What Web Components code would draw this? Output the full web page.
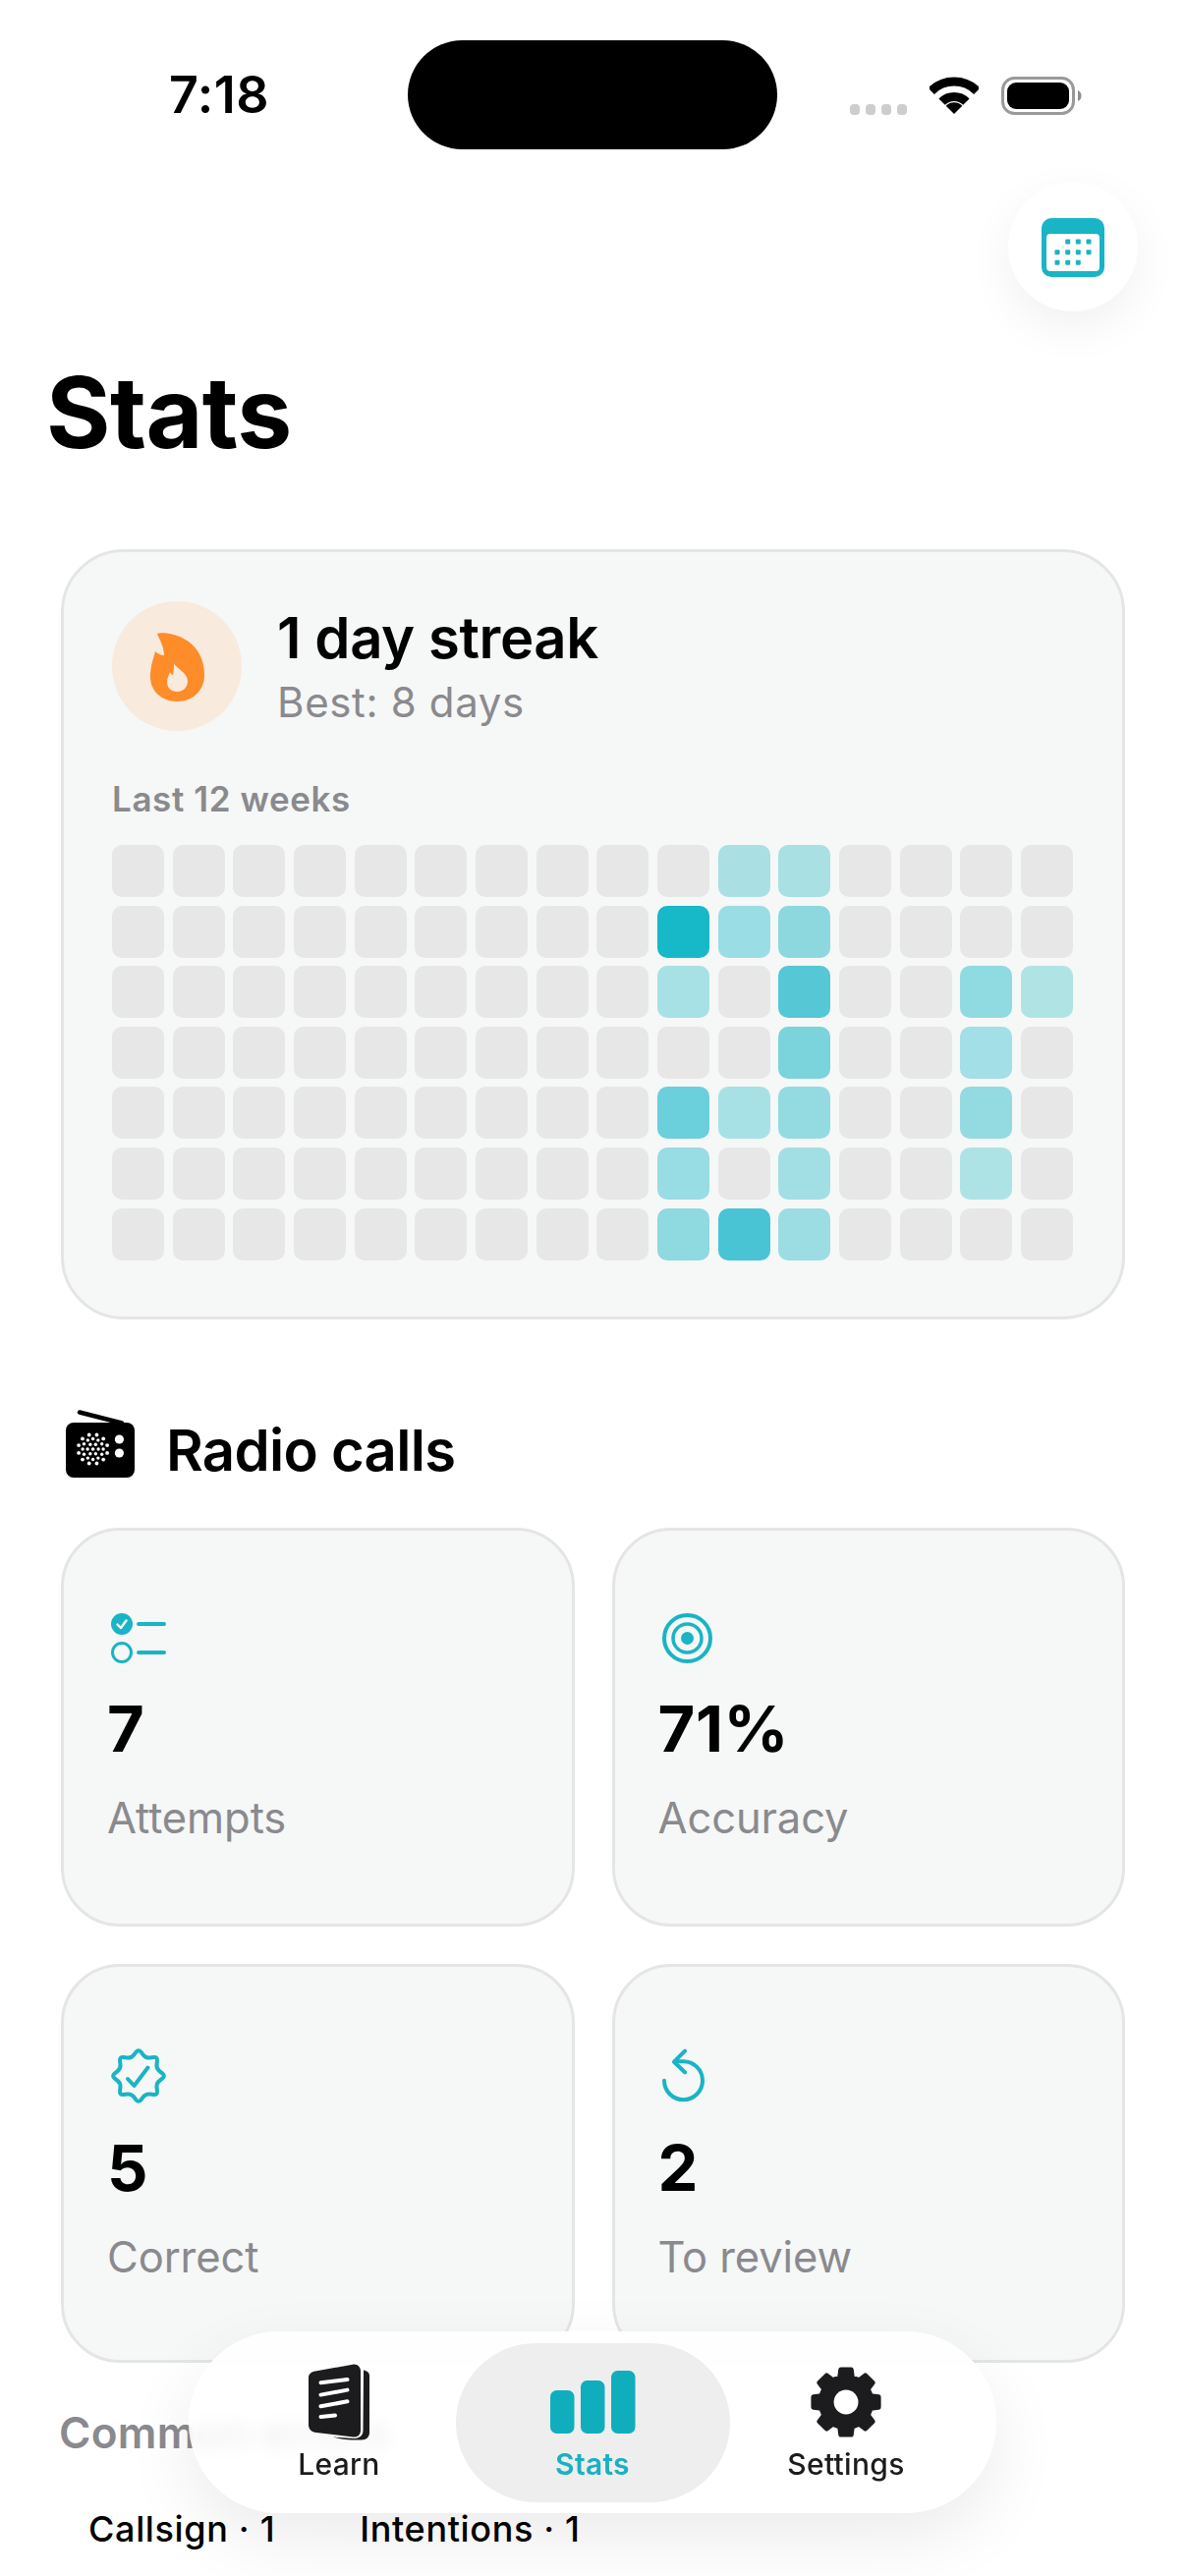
<!DOCTYPE html>
<html lang="en">
<head>
<meta charset="utf-8">
<title>Stats</title>
<style>
  html, body { margin: 0; padding: 0; background: #fff; }
  body { width: 1206px; height: 2622px; overflow: hidden; font-family: Inter, "Noto Sans", sans-serif; color: #000; }
</style>
</head>
<body>
<stats-page>
  <status-bar time="7:18"></status-bar>
  <calendar-button></calendar-button>
  <page-title>Stats</page-title>
  <streak-card>
    <span slot="title">1 day streak</span>
    <span slot="sub">Best: 8 days</span>
    <span slot="caption">Last 12 weeks</span>
  </streak-card>
  <section-title><app-icon slot="icon" name="radio"></app-icon>Radio calls</section-title>
  <stat-grid>
    <stat-card><app-icon slot="icon" name="list"></app-icon><span slot="value">7</span>Attempts</stat-card>
    <stat-card><app-icon slot="icon" name="target"></app-icon><span slot="value">71%</span>Accuracy</stat-card>
    <stat-card><app-icon slot="icon" name="seal" style="margin:-1px 0"></app-icon><span slot="value">5</span>Correct</stat-card>
    <stat-card><app-icon slot="icon" name="review" style="margin:-1px 0 -1px -3px"></app-icon><span slot="value">2</span>To review</stat-card>
  </stat-grid>
  <errors-list>
    <span slot="heading">Common errors</span>
    <error-chip>Callsign · 1</error-chip>
    <error-chip>Intentions · 1</error-chip>
  </errors-list>
</stats-page>
<tab-bar>
  <tab-item><app-icon slot="icon" name="learn"></app-icon>Learn</tab-item>
  <tab-item active><app-icon slot="icon" name="bars"></app-icon>Stats</tab-item>
  <tab-item><app-icon slot="icon" name="gear"></app-icon>Settings</tab-item>
</tab-bar>

<script>
const TEAL = '#19b4c5';

function polar(r, deg) {
  const a = (deg - 90) * Math.PI / 180;
  return [r * Math.cos(a), r * Math.sin(a)];
}

function xy(p) {
  return p[0].toFixed(2) + ' ' + p[1].toFixed(2);
}

// eight pointed badge outline, corners softened
function sealPath() {
  const pts = [];
  for (let i = 0; i < 8; i++) {
    pts.push(polar(27.5, i * 45), polar(19.5, i * 45 + 22.5));
  }
  const t = 0.35;
  let d = '';
  pts.forEach((v, i) => {
    const p = pts[(i + pts.length - 1) % pts.length], n = pts[(i + 1) % pts.length];
    const a = [v[0] + (p[0] - v[0]) * t, v[1] + (p[1] - v[1]) * t];
    const b = [v[0] + (n[0] - v[0]) * t, v[1] + (n[1] - v[1]) * t];
    d += (i ? 'L' : 'M') + xy(a) + 'Q' + xy(v) + ' ' + xy(b);
  });
  return d + 'Z';
}

// gear outline with eight teeth
function gearPath() {
  let d = '';
  for (let i = 0; i < 8; i++) {
    const a = i * 45;
    d += (i ? 'L' : 'M') + xy(polar(26, a - 14)) + 'L' + xy(polar(33.5, a - 9)) + 'L' + xy(polar(33.5, a + 9)) + 'L' + xy(polar(26, a + 14));
  }
  return d + 'Z';
}

// speaker holes of the radio
function speakerDots() {
  let out = '<circle cx="0" cy="0" r="1.8"/>';
  [[5.5, 6, 1.7], [10.5, 12, 1.7], [15, 12, 1.9]].forEach(([r, n, s], k) => {
    for (let i = 0; i < n; i++) {
      const a = (i + (k === 2 ? 0.5 : 0)) * 2 * Math.PI / n;
      out += `<circle cx="${(r * Math.cos(a)).toFixed(2)}" cy="${(r * Math.sin(a)).toFixed(2)}" r="${s}"/>`;
    }
  });
  return out;
}

function calendarDots() {
  const xs = [16, 26.7, 37.3, 48], ys = [24, 34.7, 45.3], on = [[1, 2, 3], [0, 1, 2, 3], [0, 1, 2]];
  let out = '';
  on.forEach((row, r) => row.forEach(c => {
    out += `<rect x="${xs[c] - 2.5}" y="${ys[r] - 2.5}" width="5" height="5" rx="1"/>`;
  }));
  return out;
}

const ICONS = {
  radio: `<svg width="70" height="70" viewBox="0 0 70 70"><path d="M14 2.500 57 13.500" stroke="#000" stroke-width="4.400" stroke-linecap="round"/><rect x="0" y="13" width="70" height="56" rx="8" fill="#000"/><g transform="translate(27.6 40)" fill="#fff">${speakerDots()}</g><circle cx="54.400" cy="30" r="4.600" fill="#fff"/><circle cx="54.400" cy="44" r="4.600" fill="#fff"/></svg>`,
  list: `<svg width="56" height="51" viewBox="0 0 56 51" fill="none"><circle cx="11" cy="11" r="11" fill="${TEAL}"/><path d="M6.500 11.500 10 15 15.500 7.500" stroke="#fff" stroke-width="2.400" stroke-linecap="round" stroke-linejoin="round"/><circle cx="11" cy="40" r="9.500" stroke="${TEAL}" stroke-width="3"/><path d="M28 11H54M28 40H54" stroke="${TEAL}" stroke-width="4" stroke-linecap="round"/></svg>`,
  target: `<svg width="51" height="51" viewBox="0 0 51 51" fill="none" stroke="${TEAL}"><circle cx="25.500" cy="25.500" r="23.500" stroke-width="4"/><circle cx="25.500" cy="25.500" r="14.500" stroke-width="3.500"/><circle cx="25.500" cy="25.500" r="6.500" fill="${TEAL}" stroke="none"/></svg>`,
  seal: `<svg width="56" height="56" viewBox="-28 -28 56 56" fill="none" stroke="${TEAL}" stroke-width="4" stroke-linecap="round" stroke-linejoin="round"><path d="${sealPath()}"/><path d="M-11 3-4.500 10 9.500-8.500"/></svg>`,
  review: `<svg width="56" height="56" viewBox="20 14 56 56" fill="none" stroke="${TEAL}" stroke-width="4" stroke-linecap="round" stroke-linejoin="round"><path d="M25 46.700A19.500 19.500 0 1 0 44.500 27.200H36"/><path d="M46 16.700 35 27.700 46 38.300"/></svg>`,
  learn: `<svg width="62" height="78" viewBox="0 0 62 78"><path d="M56 6.500C59.500 7 62 9 62 12V70C62 74.500 59 77.500 54 77.500H44C37 77.500 30 76 25 74.500L47 76C52 75.500 55.500 73 55.500 68Z" fill="#1c1c1e"/><path d="M7 7.500 45 .7C49.500 0 53 3 53 7.500V68C53 72 50 75 45.500 74.500L8 70C3 69.500 0 66.500 0 62V14C0 10.500 3 8 7 7.500Z" fill="#1c1c1e"/><path d="M12.500 19.300 39.500 16M12.500 31.600 39.500 26.600M12.500 43.300 39.500 38.300M12.500 54 27 52.600" stroke="#fff" stroke-width="4" stroke-linecap="round" fill="none"/></svg>`,
  bars: `<svg width="87" height="64" viewBox="0 0 87 64" fill="#10aebd"><rect x="0" y="20" width="24.500" height="44" rx="6.500"/><rect x="31" y="10" width="24.500" height="54" rx="6.500"/><rect x="62" y="0" width="24.500" height="64" rx="6.500"/></svg>`,
  gear: `<svg width="72" height="72" viewBox="-36 -36 72 72"><path d="${gearPath()}" fill="#1c1c1e" stroke="#1c1c1e" stroke-width="5" stroke-linejoin="round"/><circle r="12.500" fill="#fff"/></svg>`
};

class AppIcon extends HTMLElement {
  constructor() {
    super();
    this.attachShadow({ mode: 'open' });
    this.shadowRoot.innerHTML = `
      <style>
        :host { display: block; line-height: 0; }
      </style>
      ${ICONS[this.getAttribute('name')] || ''}
    `;
  }
}
customElements.define('app-icon', AppIcon);

class StatsPage extends HTMLElement {
  constructor() {
    super();
    this.attachShadow({ mode: 'open' });
    this.shadowRoot.innerHTML = `
      <style>
        :host { display: flex; flex-direction: column; width: 1206px; }
      </style>
      <slot></slot>
    `;
  }
}
customElements.define('stats-page', StatsPage);

class StatusBar extends HTMLElement {
  constructor() {
    super();
    this.attachShadow({ mode: 'open' });
    this.shadowRoot.innerHTML = `
      <style>
        :host { display: flex; height: 111px; padding-top: 41px; box-sizing: content-box; }
        .time { width: 415px; height: 111px; box-sizing: border-box; padding: 30px 0 0 172px; font-size: 52px; line-height: 52px; font-weight: 600; letter-spacing: .5px; }
        .island { width: 376px; height: 111px; background: #000; border-radius: 56px; }
        .right { display: flex; align-items: flex-start; margin-left: 74px; padding-top: 37px; }
        .dots { display: flex; gap: 6px; margin-top: 28px; margin-right: 23px; }
        .dots i { width: 10px; height: 11px; border-radius: 4px; background: #cdcdcd; }
        .wifi { margin-right: 23px; }
      </style>
      <div class="time">${this.getAttribute('time')}</div>
      <div class="island"></div>
      <div class="right">
        <div class="dots"><i></i><i></i><i></i><i></i></div>
        <svg class="wifi" width="50" height="38" viewBox="0 0 50 38"><path d="M1.700 14.700A33 33 0 0 1 48.300 14.700M12.600 25.600A17.500 17.500 0 0 1 37.400 25.600" fill="none" stroke="#000" stroke-width="9"/><path d="M25 38 16.700 29.700A11.700 11.700 0 0 1 33.300 29.700Z" fill="#000"/></svg>
        <svg width="82" height="39" viewBox="0 0 82 39"><rect x="1.500" y="1.500" width="72" height="36" rx="12" fill="none" stroke="#9a9a9a" stroke-width="3"/><rect x="6" y="6" width="63" height="27" rx="9" fill="#000"/><path d="M78 14C80.500 15 81.500 17 81.500 19.500S80.500 24 78 25Z" fill="#8e8e8e"/></svg>
      </div>
    `;
  }
}
customElements.define('status-bar', StatusBar);

class CalendarButton extends HTMLElement {
  constructor() {
    super();
    this.attachShadow({ mode: 'open' });
    this.shadowRoot.innerHTML = `
      <style>
        :host { display: flex; justify-content: flex-end; padding: 33px 48px 0 0; }
        .btn { width: 132px; height: 132px; border-radius: 50%; background: #fff; display: flex; align-items: center; justify-content: center; box-shadow: 0 16px 48px rgba(0,0,0,.06); }
        svg { margin-top: 2px; }
      </style>
      <div class="btn">
        <svg width="64" height="60" viewBox="0 0 64 60"><rect width="64" height="60" rx="10" fill="${TEAL}"/><rect x="5" y="16" width="54" height="38" rx="4" fill="#fff"/><g fill="${TEAL}">${calendarDots()}</g></svg>
      </div>
    `;
  }
}
customElements.define('calendar-button', CalendarButton);

class PageTitle extends HTMLElement {
  constructor() {
    super();
    this.attachShadow({ mode: 'open' });
    this.shadowRoot.innerHTML = `
      <style>
        :host { display: block; margin: 53px 0 0 47px; font-size: 100px; line-height: 100px; font-weight: 700; letter-spacing: -.6px; }
      </style>
      <slot></slot>
    `;
  }
}
customElements.define('page-title', PageTitle);

class StreakCard extends HTMLElement {
  constructor() {
    super();
    this.attachShadow({ mode: 'open' });
    // teal cells as "row,col": colour
    const hot = {
      '0,10': '#aae0e4', '0,11': '#a9e0e3',
      '1,9': '#17b8c8', '1,10': '#9bdde4', '1,11': '#8dd8df',
      '2,9': '#a8e1e5', '2,11': '#55c7d5', '2,14': '#90dae1', '2,15': '#b0e3e4',
      '3,11': '#7bd3dc', '3,14': '#a2dfe6',
      '4,9': '#6bcfdc', '4,10': '#a8e1e5', '4,11': '#93dbe1', '4,14': '#93dae1',
      '5,9': '#98dce4', '5,11': '#a2dfe5', '5,14': '#aee3e6',
      '6,9': '#8fd9e1', '6,10': '#48c4d4', '6,11': '#9bdde3'
    };
    let cells = '';
    for (let r = 0; r < 7; r++) {
      for (let c = 0; c < 16; c++) {
        const col = hot[r + ',' + c];
        cells += `<i${col ? ` style="background:${col}"` : ''}></i>`;
      }
    }
    this.shadowRoot.innerHTML = `
      <style>
        :host { display: block; box-sizing: border-box; width: 1083px; margin: 89px 0 0 62px; padding: 50px 50px 57px 49px; background: #f6f7f7; border: 3px solid #e5e5e5; border-radius: 64px; }
        .top { display: flex; gap: 36px; }
        .flame { width: 132px; height: 132px; border-radius: 50%; background: #f8eadd; display: flex; align-items: center; justify-content: center; }
        .text { padding-top: 4px; }
        .title { font-size: 58px; line-height: 66px; font-weight: 600; letter-spacing: -.4px; }
        .sub { margin-top: 8px; font-size: 42px; line-height: 50px; color: #8a8a8e; letter-spacing: .65px; }
        .caption { margin-top: 49px; font-size: 35px; line-height: 40px; font-weight: 600; letter-spacing: .6px; color: #8a8a8e; }
        .grid { display: grid; grid-template-columns: repeat(16, 1fr); grid-auto-rows: 53px; gap: 8.6px; margin-top: 27px; }
        .grid i { display: block; background: #e7e7e7; border-radius: 10px; }
      </style>
      <div class="top">
        <div class="flame">
          <svg width="55" height="71" viewBox="0 0 55 71"><path d="M7 2C14-1 55 4 55 44 55 60 43 71 27.500 71 11 71 0 60 0 46 0 35 3 28 5 20 7 22 10 24 14 24 14 16 10 9 7 2Z" fill="#fd8c29"/><path d="M24 32C26 37 38 42 38 50 38 57 33 61 27.500 61 21 61 17 57 17 51 17 47 19 44 20 41 21 43 22 44 23 44 24 40 24 36 24 32Z" fill="#f8eadd"/></svg>
        </div>
        <div class="text">
          <div class="title"><slot name="title"></slot></div>
          <div class="sub"><slot name="sub"></slot></div>
        </div>
      </div>
      <div class="caption"><slot name="caption"></slot></div>
      <div class="grid">${cells}</div>
    `;
  }
}
customElements.define('streak-card', StreakCard);

class SectionTitle extends HTMLElement {
  constructor() {
    super();
    this.attachShadow({ mode: 'open' });
    this.shadowRoot.innerHTML = `
      <style>
        :host { display: flex; align-items: flex-start; gap: 32px; margin: 92px 0 0 67px; font-size: 58px; line-height: 70px; font-weight: 600; letter-spacing: -.7px; }
        .label { margin-top: 6px; }
      </style>
      <slot name="icon"></slot>
      <div class="label"><slot></slot></div>
    `;
  }
}
customElements.define('section-title', SectionTitle);

class StatGrid extends HTMLElement {
  constructor() {
    super();
    this.attachShadow({ mode: 'open' });
    this.shadowRoot.innerHTML = `
      <style>
        :host { display: grid; grid-template-columns: 1fr 1fr; grid-auto-rows: 406px; gap: 38px; width: 1083px; margin: 44px 0 0 62px; }
      </style>
      <slot></slot>
    `;
  }
}
customElements.define('stat-grid', StatGrid);

class StatCard extends HTMLElement {
  constructor() {
    super();
    this.attachShadow({ mode: 'open' });
    this.shadowRoot.innerHTML = `
      <style>
        :host { display: flex; flex-direction: column; box-sizing: border-box; padding: 84px 20px 0 43px; background: #f6f7f7; border: 3px solid #e5e5e5; border-radius: 60px; }
        .icon { margin-left: 5px; min-height: 51px; }
        .value { margin-top: 29px; padding-left: 1px; font-size: 65px; line-height: 76px; font-weight: 700; letter-spacing: .6px; }
        .label { margin-top: 26px; padding-left: 1px; font-size: 43.5px; line-height: 52px; letter-spacing: -.1px; color: #8a8a8e; }
      </style>
      <div class="icon"><slot name="icon"></slot></div>
      <div class="value"><slot name="value"></slot></div>
      <div class="label"><slot></slot></div>
    `;
  }
}
customElements.define('stat-card', StatCard);

class ErrorsList extends HTMLElement {
  constructor() {
    super();
    this.attachShadow({ mode: 'open' });
    this.shadowRoot.innerHTML = `
      <style>
        :host { display: block; margin: 45px 0 0 60px; }
        .heading { font-size: 44px; line-height: 52px; font-weight: 600; letter-spacing: .3px; color: #8a8a8e; }
        .chips { display: flex; gap: 86px; margin: 52px 0 0 30px; }
      </style>
      <div class="heading"><slot name="heading"></slot></div>
      <div class="chips"><slot></slot></div>
    `;
  }
}
customElements.define('errors-list', ErrorsList);

class ErrorChip extends HTMLElement {
  constructor() {
    super();
    this.attachShadow({ mode: 'open' });
    this.shadowRoot.innerHTML = `
      <style>
        :host { display: block; font-size: 36px; line-height: 40px; font-weight: 500; letter-spacing: .65px; white-space: nowrap; }
      </style>
      <slot></slot>
    `;
  }
}
customElements.define('error-chip', ErrorChip);

class TabBar extends HTMLElement {
  constructor() {
    super();
    this.attachShadow({ mode: 'open' });
    this.shadowRoot.innerHTML = `
      <style>
        :host { position: absolute; left: 192px; top: 2373px; width: 822px; height: 185px; box-sizing: border-box; padding-top: 12px; display: flex; justify-content: center; border-radius: 93px; background: rgba(255,255,255,.86); -webkit-backdrop-filter: blur(9px); backdrop-filter: blur(9px); box-shadow: 0 26px 70px rgba(0,0,0,.08); }
      </style>
      <slot></slot>
    `;
  }
}
customElements.define('tab-bar', TabBar);

class TabItem extends HTMLElement {
  constructor() {
    super();
    this.attachShadow({ mode: 'open' });
    this.shadowRoot.innerHTML = `
      <style>
        :host { display: flex; flex-direction: column; align-items: center; box-sizing: border-box; width: 258px; height: 162px; padding-top: 21px; color: #1c1c1e; font-size: 30px; line-height: 36px; font-weight: 500; letter-spacing: .3px; }
        :host([active]) { width: 279px; margin: 0 -10.5px; border-radius: 81px; background: #eeeeee; color: #19b1c1; font-weight: 600; }
        .icon { display: flex; align-items: center; justify-content: center; height: 78px; }
        .label { margin-top: 6px; }
      </style>
      <div class="icon"><slot name="icon"></slot></div>
      <div class="label"><slot></slot></div>
    `;
  }
}
customElements.define('tab-item', TabItem);
</script>
</body>
</html>
